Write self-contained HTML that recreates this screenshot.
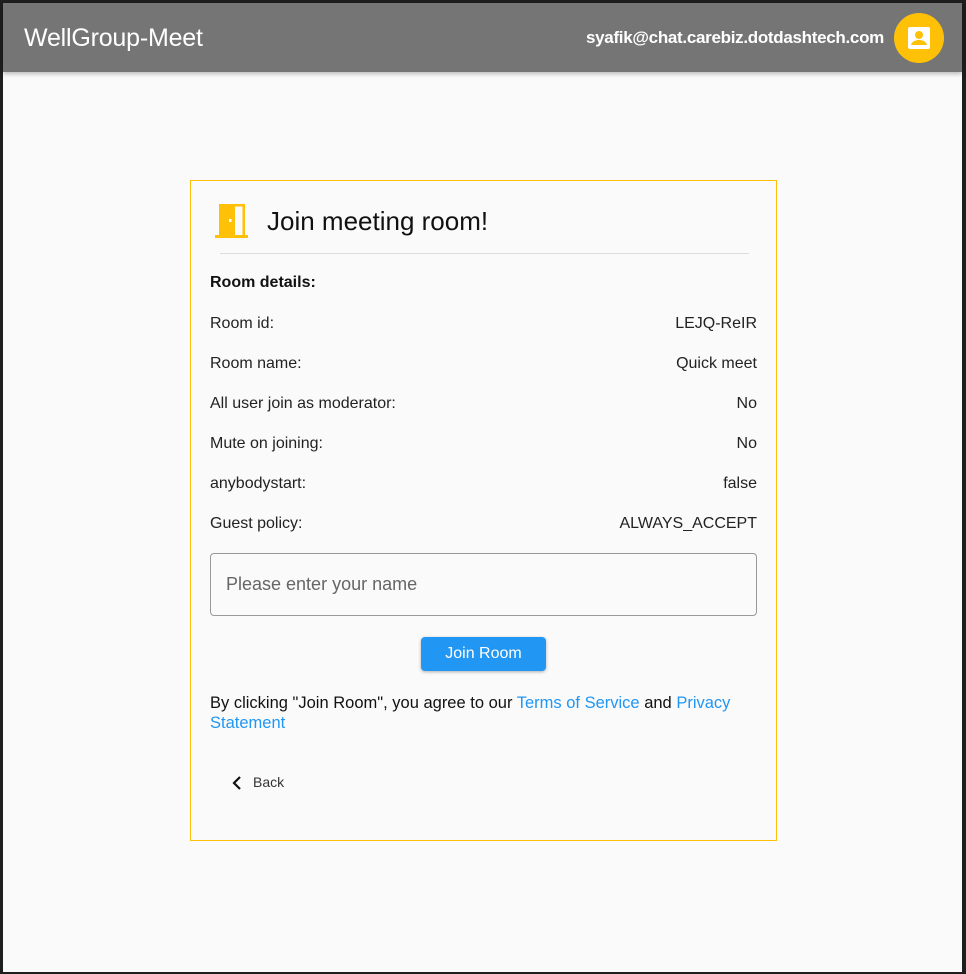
<!DOCTYPE html>
<html><head><meta charset="utf-8"><style>
*{box-sizing:border-box;margin:0;padding:0}
body{width:966px;height:974px;background:#1e1e1e;font-family:"Liberation Sans",sans-serif;position:relative;overflow:hidden}
#page{position:absolute;left:3px;top:3px;width:959px;height:969px;background:#fafafa}
#hdr{position:absolute;left:0;top:0;width:959px;height:69px;background:#757575;box-shadow:0 2px 4px rgba(0,0,0,.25)}
#hdr .t{position:absolute;left:21px;top:21px;color:#fff;font-size:25px;letter-spacing:-0.2px}
#hdr .e{position:absolute;right:78px;top:25px;color:#fff;font-size:17px;font-weight:bold;letter-spacing:-0.3px}
#av{position:absolute;left:891px;top:10px;width:50px;height:50px;border-radius:50%;background:#ffc107}
#card{position:absolute;left:187px;top:177px;width:587px;height:661px;border:1px solid #ffc107}
.a{position:absolute;font-size:16px;color:#222}
.r{position:absolute;right:19px;font-size:16px;color:#222}
a{color:#2196f3;text-decoration:none}
</style></head><body><div id="page">
<div id="hdr"><div class="t">WellGroup-Meet</div><div class="e">syafik@chat.carebiz.dotdashtech.com</div>
<div id="av"><svg width="50" height="50" viewBox="0 0 50 50"><rect x="14" y="14" width="22" height="22" rx="2" fill="#fff"/><circle cx="25" cy="22" r="4" fill="#ffc107"/><path d="M17 32c1-4 5-5 8-5s7 1 8 5z" fill="#ffc107"/></svg></div></div>
<div id="card">
<svg style="position:absolute;left:24px;top:23px" width="34" height="35" viewBox="0 0 34 35"><rect x="4" y="0" width="16" height="33" fill="#ffc107"/><rect x="20" y="0" width="10" height="2.5" fill="#ffc107"/><rect x="27.5" y="0" width="2.5" height="33" fill="#ffc107"/><rect x="0" y="31" width="33" height="3" fill="#ffc107"/><rect x="14" y="15" width="2.5" height="3" fill="#fff"/></svg>
<div style="position:absolute;left:76px;top:25px;font-size:26px;color:#111">Join meeting room!</div>
<div style="position:absolute;left:29px;top:72px;width:529px;height:1px;background:#ddd"></div>
<div class="a" style="left:19px;top:93px;font-weight:bold;color:#111">Room details:</div>
<div class="a" style="left:19px;top:134px">Room id:</div><div class="r" style="top:134px">LEJQ-ReIR</div>
<div class="a" style="left:19px;top:174px">Room name:</div><div class="r" style="top:174px">Quick meet</div>
<div class="a" style="left:19px;top:214px">All user join as moderator:</div><div class="r" style="top:214px">No</div>
<div class="a" style="left:19px;top:254px">Mute on joining:</div><div class="r" style="top:254px">No</div>
<div class="a" style="left:19px;top:294px">anybodystart:</div><div class="r" style="top:294px">false</div>
<div class="a" style="left:19px;top:334px">Guest policy:</div><div class="r" style="top:334px">ALWAYS_ACCEPT</div>
<div style="position:absolute;left:19px;top:372px;width:547px;height:63px;border:1px solid #999;border-radius:4px"><span style="position:absolute;left:15px;top:20px;font-size:18px;color:#666">Please enter your name</span></div>
<div style="position:absolute;left:230px;top:456px;width:125px;height:34px;background:#2196f3;border-radius:4px;box-shadow:0 1px 3px rgba(0,0,0,.3);color:#fff;font-size:16px;text-align:center;line-height:34px">Join Room</div>
<div class="a" style="left:19px;top:512px;width:550px;line-height:20px;color:#111;font-size:16.5px">By clicking "Join Room", you agree to our <a>Terms of Service</a> and <a>Privacy Statement</a></div>
<svg style="position:absolute;left:40px;top:594px" width="12" height="16" viewBox="0 0 12 16"><path d="M9 2L3 8l6 6" stroke="#111" stroke-width="2.2" fill="none"/></svg>
<div class="a" style="left:62px;top:593px;font-size:14px;color:#333">Back</div>
</div>
</div></body></html>
